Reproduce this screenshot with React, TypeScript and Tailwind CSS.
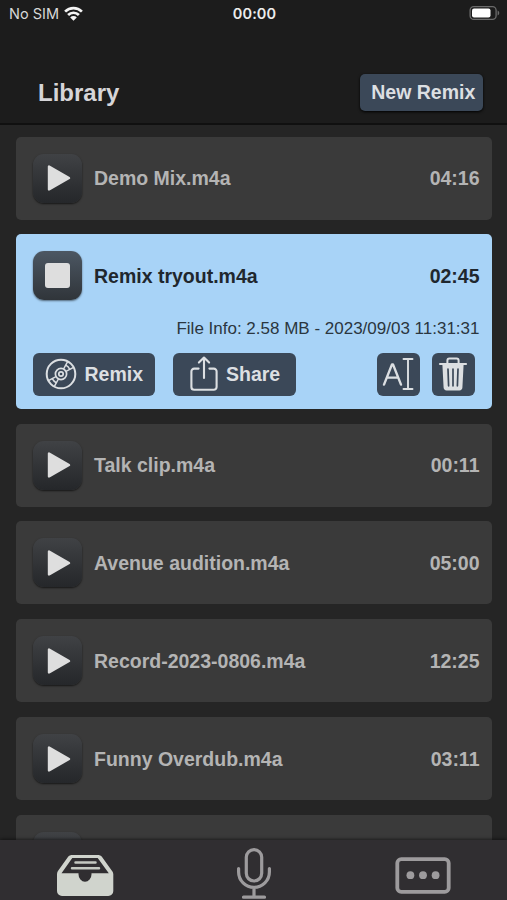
type Track = {
  name: string
  time: string
  info?: string
}

const tracks: Track[] = [
  { name: "Demo Mix.m4a", time: "04:16" },
  { name: "Remix tryout.m4a", time: "02:45", info: "File Info: 2.58 MB - 2023/09/03 11:31:31" },
  { name: "Talk clip.m4a", time: "00:11" },
  { name: "Avenue audition.m4a", time: "05:00" },
  { name: "Record-2023-0806.m4a", time: "12:25" },
  { name: "Funny Overdub.m4a", time: "03:11" },
  { name: "", time: "" },
]

const StatusBar = () => {
  return (
    <div className="grid h-7 grid-cols-3 items-center pl-[9px] pr-[7px] font-['Inter',sans-serif] text-[14.5px] text-[#ececec]">
      <div className="flex items-center gap-[5px]">
        <span className="text-[#d8d8d8]">No SIM</span>
        <svg className="-mt-0.5" width="19" height="15" viewBox="0 0 19 15" fill="none" stroke="#f4f4f4" strokeWidth="2.7">
          <path d="M1.1 5.6a12 12 0 0 1 16.8 0" />
          <path d="M4.1 9a7.6 7.6 0 0 1 10.8 0" />
          <path d="M9.5 14.8 6.2 11.5a4.6 4.6 0 0 1 6.6 0z" fill="#f4f4f4" stroke="none" />
        </svg>
      </div>
      <span className="text-center font-semibold tracking-[0.1px]">00:00</span>
      <svg className="-mt-0.5 justify-self-end" width="31" height="16" viewBox="0 0 31 16">
        <rect x="1.1" y="1.6" width="26" height="12.8" rx="3.6" fill="none" stroke="#6b6b6b" strokeWidth="1.3" />
        <rect x="3" y="3.5" width="18.5" height="9" rx="2" fill="#fff" />
        <path d="M28.6 5.6c2.2.9 2.2 4 0 4.9z" fill="#6b6b6b" />
      </svg>
    </div>
  )
}

const DiscIcon = () => (
  <svg width="32" height="32" viewBox="0 0 32 32" fill="none" stroke="#dcdfe2" strokeWidth="1.5">
    <circle cx="16" cy="16" r="14.3" strokeWidth="2" />
    <circle cx="16" cy="16" r="5.6" strokeWidth="1.7" />
    <circle cx="16" cy="16" r="2.2" strokeWidth="1.7" />
    <path d="M18.6 11 22.6 3.6M21 13.4l7.6-4M13.4 21 9.4 28.4M11 18.6l-7.6 4" />
    <path d="M20.7 7.2a10 10 0 0 1 4.1 4.1M11.3 24.8a10 10 0 0 1-4.1-4.1" />
  </svg>
)

const ShareIcon = () => (
  <svg width="28" height="36" viewBox="0 0 28 36" fill="none" stroke="#dcdfe2" strokeWidth="2.1" strokeLinecap="round" strokeLinejoin="round">
    <path d="M8.6 12.6H4.2A2.8 2.8 0 0 0 1.4 15.4v15.6a2.8 2.8 0 0 0 2.8 2.8h19.6a2.8 2.8 0 0 0 2.8-2.8V15.4a2.8 2.8 0 0 0-2.8-2.8h-4.4" />
    <path d="M14 22V2M8.9 6.6 14 1.5l5.1 5.1" />
  </svg>
)

const RenameIcon = () => (
  <svg width="32" height="34" viewBox="0 0 32 34" fill="none" stroke="#dcdfe2" strokeWidth="2.4" strokeLinecap="round" strokeLinejoin="round">
    <path d="M2 27.6 10 7.4h1L19 27.6M5 20.6h11" />
    <path d="M21.5 2h9M26 2v30M21.5 32h9" strokeWidth="1.9" />
  </svg>
)

const TrashIcon = () => (
  <svg width="30" height="36" viewBox="0 0 30 36" fill="none">
    <path d="M9.4 7V4.4a2 2 0 0 1 2-2h7.2a2 2 0 0 1 2 2V7" stroke="#dcdfe2" strokeWidth="2" />
    <path d="M2 8h26" stroke="#dcdfe2" strokeWidth="2.2" strokeLinecap="round" />
    <path d="M4.4 8.8h21.2L24.4 31.6a3 3 0 0 1-3 2.8H8.6a3 3 0 0 1-3-2.8z" fill="#dcdfe2" />
    <path d="m10 13.2.6 16.6M15 13.2v16.6M20 13.2l-.6 16.6" stroke="#3b4858" strokeWidth="1.7" strokeLinecap="round" />
  </svg>
)

const PlayButton = ({ playing }: { playing: boolean }) => {
  return (
    <button
      className={
        playing
          ? "flex size-[49px] items-center justify-center rounded-[11px] bg-linear-to-b from-[#4c5763] to-[#30353a] shadow-[0_1px_2px_#00000080]"
          : "flex size-[49px] items-center justify-center rounded-[11px] bg-linear-to-b from-[#404245] to-[#25272a] shadow-[0_1px_2px_#000000a0]"
      }
    >
      {playing ? (
        <span className="size-[25px] rounded-[3px] bg-[#dedede]" />
      ) : (
        <svg className="ml-[3px]" width="24" height="28" viewBox="0 0 24 28">
          <path d="M2 2.6v22.8L22 14z" fill="#dedede" stroke="#dedede" strokeWidth="2.4" strokeLinejoin="round" />
        </svg>
      )}
    </button>
  )
}

const TrackCard = ({ track }: { track: Track }) => {
  const open = Boolean(track.info)
  return (
    <li
      className={
        open
          ? "h-[174.6px] shrink-0 rounded-[5px] bg-[#a8d3f7] pl-[17px] pr-[12px] text-[#1f272e]"
          : "h-[83px] shrink-0 rounded-[5px] bg-[#3a3a3a] pl-[17px] pr-[12px] text-[#b4b4b4]"
      }
    >
      <div className="flex h-[83px] items-center text-[19.5px] font-bold">
        <PlayButton playing={open} />
        <span className="ml-[12.5px] flex-1 pt-[1.5px]">{track.name}</span>
        <span className="pt-[1.5px]">{track.time}</span>
      </div>
      {open && (
        <>
          <p className="pt-px text-right text-[17px] leading-[21px] text-[#2b3640]">{track.info}</p>
          <div className="mt-[13.5px] flex items-center text-[19.5px] font-bold text-[#dcdfe2]">
            <button className="flex h-[43px] w-[122.5px] items-center gap-[7.5px] rounded-[6px] bg-[#3b4858] pl-[12.5px]">
              <DiscIcon />
              <span className="pt-px">Remix</span>
            </button>
            <button className="ml-[18px] flex h-[43px] w-[122.5px] items-center gap-[8.5px] rounded-[6px] bg-[#3b4858] pl-[16.5px]">
              <ShareIcon />
              <span className="pt-px">Share</span>
            </button>
            <button className="ml-auto flex h-[43px] w-[43px] items-center justify-center rounded-[6px] bg-[#3b4858]">
              <RenameIcon />
            </button>
            <button className="ml-3 mr-[5px] flex h-[43px] w-[43px] items-center justify-center rounded-[6px] bg-[#3b4858]">
              <TrashIcon />
            </button>
          </div>
        </>
      )}
    </li>
  )
}

const TabBar = () => {
  return (
    <nav className="z-10 grid h-[60px] shrink-0 grid-cols-3 bg-[#302e31] shadow-[0_-1px_3px_#00000080]">
      <button className="flex justify-center pt-[14px]">
        <svg width="58" height="44" viewBox="0 0 58 44">
          <path d="M15.5 1h27a4 4 0 0 1 3.2 1.6l10 14A6 6 0 0 1 57.3 20v17a5 5 0 0 1-5 5H6a5 5 0 0 1-5-5V20a6 6 0 0 1 1.3-3.4l10-14A4 4 0 0 1 15.5 1z" fill="#d0d4cd" />
          <path d="M16.3 4h25.4L52.8 19.3H35.5v1a6.5 7.5 0 0 1-13 0v-1H5.5z" fill="#302e31" />
          <path d="M19.5 8.6h20M16 14.3h27" stroke="#c4c8c1" strokeWidth="2.5" strokeLinecap="round" />
        </svg>
      </button>
      <button className="flex justify-center pt-[7px]">
        <svg width="38" height="52" viewBox="0 0 38 52" fill="none" stroke="#9d9b9d" strokeWidth="3.2" strokeLinecap="round">
          <rect x="11.3" y="2.6" width="15.4" height="31.4" rx="7.7" />
          <path d="M3.6 21.5V25a15.4 15.4 0 0 0 30.8 0v-3.5M19 40.6v9M8.5 50.2h21" />
        </svg>
      </button>
      <button className="flex justify-center pt-[17px]">
        <svg width="56" height="37" viewBox="0 0 56 37" fill="#9d9b9d">
          <rect x="2.3" y="2.1" width="51.4" height="32.8" rx="4" fill="none" stroke="#9d9b9d" strokeWidth="3.8" />
          <circle cx="15.4" cy="18.2" r="3.9" />
          <circle cx="28" cy="18.2" r="3.9" />
          <circle cx="40.6" cy="18.2" r="3.9" />
        </svg>
      </button>
    </nav>
  )
}

const App = () => {
  return (
    <div className="flex h-[900px] w-[507px] flex-col overflow-hidden bg-[#252525] font-['Liberation_Sans',Arial,sans-serif]">
      <header className="h-[124.5px] shrink-0 border-b-2 border-[#101010] bg-[#1c1c1c]">
        <StatusBar />
        <div className="mt-[46px] flex h-[37px] items-center justify-between pl-[38px] pr-[24.5px]">
          <h1 className="text-[24px] font-bold text-[#d6d5d8]">Library</h1>
          <button className="h-[37px] w-[122.5px] rounded-[5px] bg-[#3b4858] pl-[4px] pt-px text-[19.5px] font-bold text-[#dcdfe2] shadow-[0_1px_3px_#000000]">
            New Remix
          </button>
        </div>
      </header>
      <main className="min-h-0 flex-1 overflow-hidden px-[15.5px] pt-[12px]">
        <ul className="flex flex-col gap-[14.8px]">
          {tracks.map((track, i) => (
            <TrackCard key={i} track={track} />
          ))}
        </ul>
      </main>
      <TabBar />
    </div>
  )
}

export default App
